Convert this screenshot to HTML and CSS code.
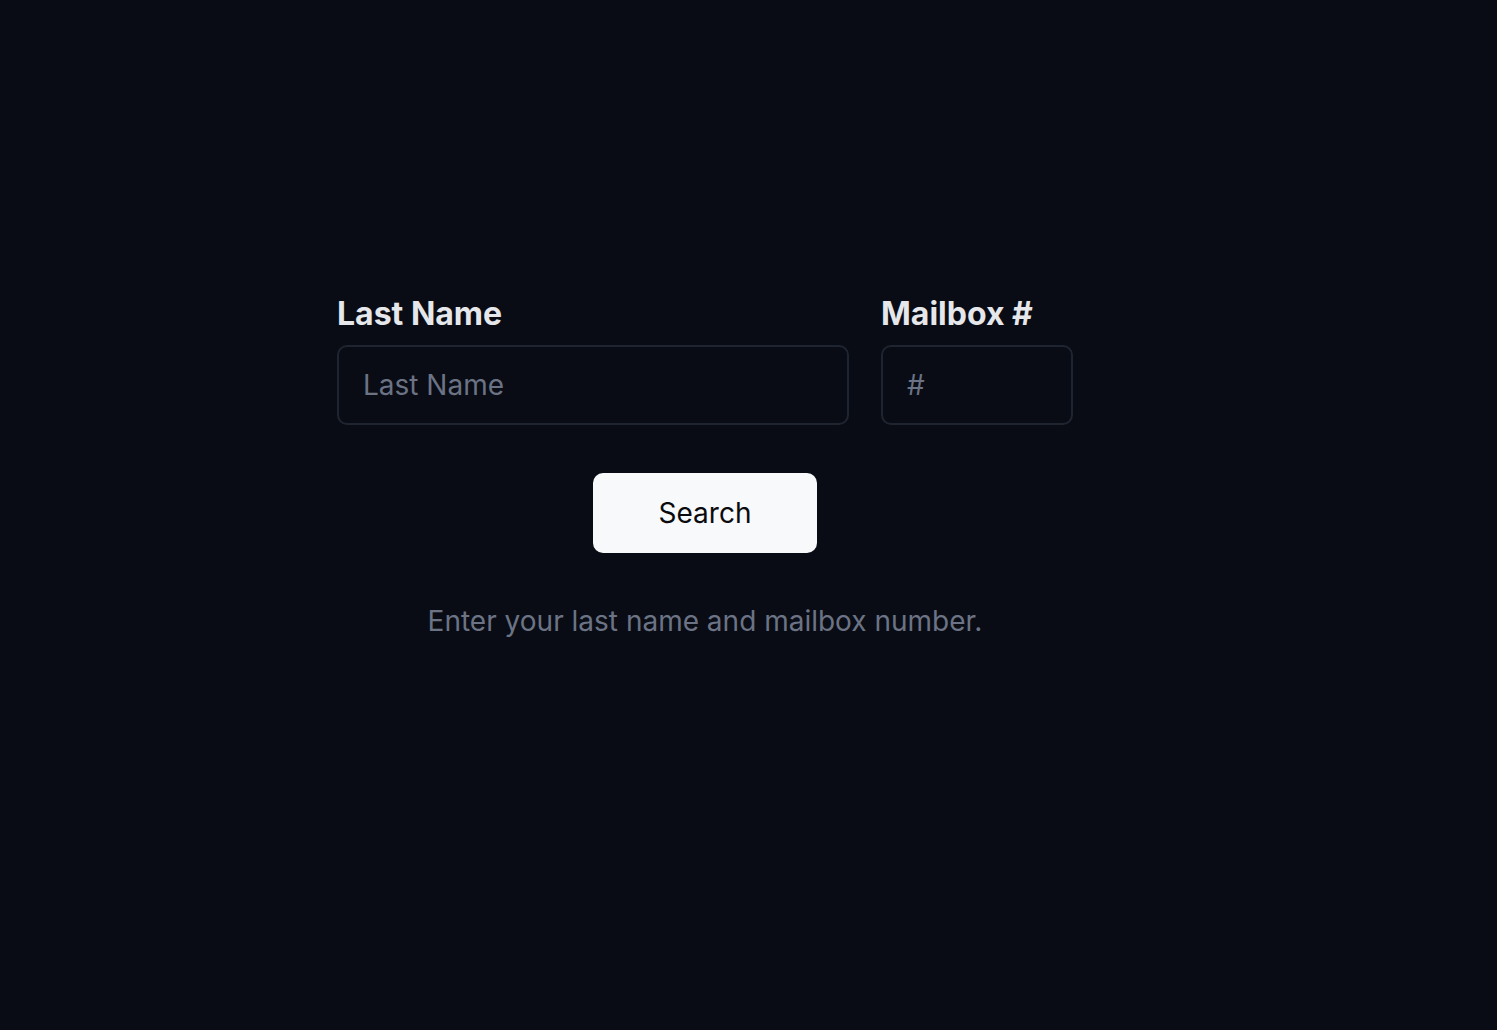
FILE: index.html
```html
<!DOCTYPE html>
<html lang="en">
<head>
<meta charset="utf-8">
<title>Mailbox Search</title>
<link rel="stylesheet" href="styles.css">
</head>
<body>
<main class="page">
  <form class="lookup">
    <div class="fields">
      <label class="field field-name">
        <span class="label">Last Name</span>
        <input class="input" type="text" placeholder="Last Name">
      </label>
      <label class="field field-box">
        <span class="label">Mailbox #</span>
        <input class="input" type="text" placeholder="#">
      </label>
    </div>
    <button class="btn" type="button">Search</button>
    <p class="hint">Enter your last name and mailbox number.</p>
  </form>
</main>
</body>
</html>
```

FILE: styles.css
```css
html, body {
  margin: 0;
  padding: 0;
  background: #090c14;
  height: 100%;
}
body {
  font-family: Inter, "Noto Sans", sans-serif;
  color: #e5e7eb;
}
.page {
  padding: 294px 0 0 337px;
}
.lookup {
  width: 736px;
  display: flex;
  flex-direction: column;
  align-items: center;
}
.fields {
  display: flex;
  gap: 32px;
  width: 100%;
}
.field {
  display: flex;
  flex-direction: column;
  gap: 11px;
}
.field-name { width: 512px; }
.field-box { width: 192px; }
.label {
  font-size: 32px;
  line-height: 40px;
  font-weight: 700;
  color: #e5e7eb;
}
.input {
  box-sizing: border-box;
  height: 80px;
  width: 100%;
  background: transparent;
  border: 2px solid #1f2530;
  border-radius: 10px;
  padding: 0 24px;
  font-family: inherit;
  font-size: 28px;
  color: #e5e7eb;
  outline: none;
}
.input::placeholder {
  color: #6b7385;
}
.btn {
  margin-top: 48px;
  width: 224px;
  height: 80px;
  border: none;
  border-radius: 10px;
  background: #f8f9fb;
  color: #0b0b0f;
  font-family: inherit;
  font-size: 28px;
  font-weight: 400;
}
.hint {
  margin: 48px 0 0;
  font-size: 28px;
  line-height: 40px;
  color: #6b7385;
}
```
